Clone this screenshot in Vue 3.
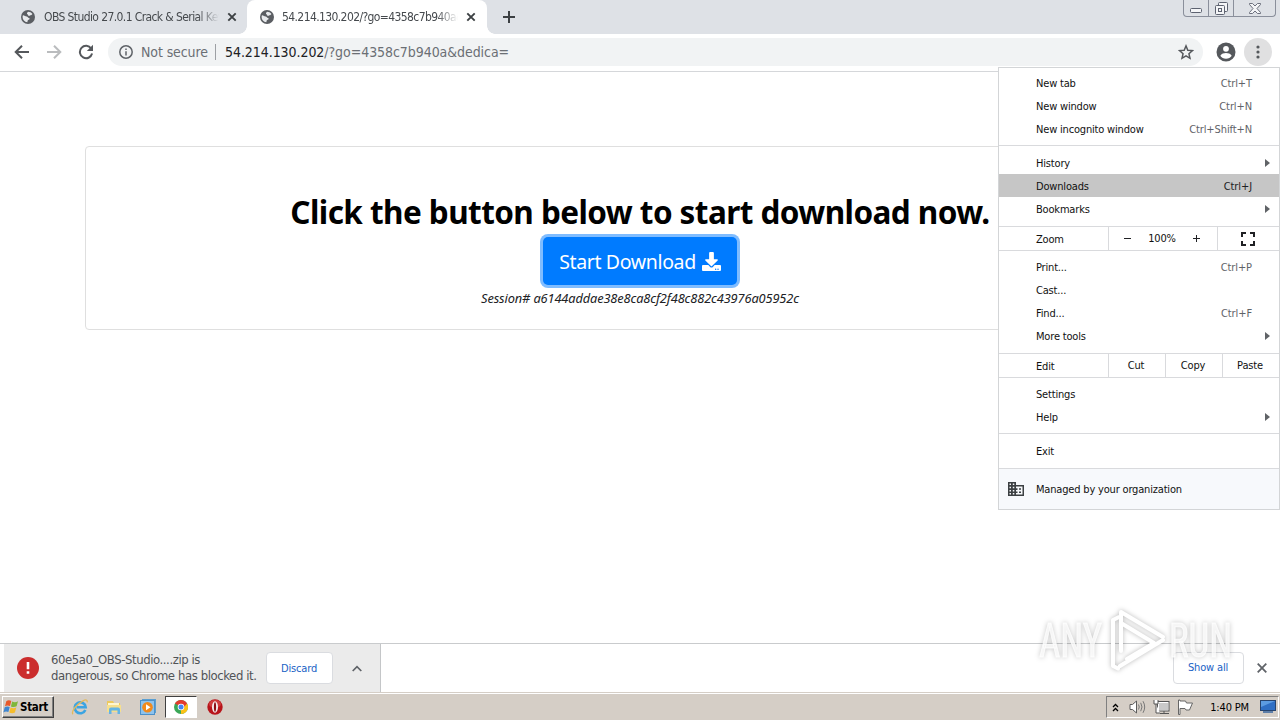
<script setup>
// Browser window with the main menu open, plus the taskbar below it
const tabs = [
  { title: 'OBS Studio 27.0.1 Crack & Serial Key', active: false },
  { title: '54.214.130.202/?go=4358c7b940a&dedica=', active: true }
]

const menuTop = [
  { label: 'New tab', keys: 'Ctrl+T' },
  { label: 'New window', keys: 'Ctrl+N' },
  { label: 'New incognito window', keys: 'Ctrl+Shift+N' }
]
const menuLibrary = [
  { label: 'History', sub: true },
  { label: 'Downloads', keys: 'Ctrl+J', hover: true },
  { label: 'Bookmarks', sub: true }
]
const menuTools = [
  { label: 'Print...', keys: 'Ctrl+P' },
  { label: 'Cast...' },
  { label: 'Find...', keys: 'Ctrl+F' },
  { label: 'More tools', sub: true }
]
const menuHelp = [{ label: 'Settings' }, { label: 'Help', sub: true }]
const menuExit = [{ label: 'Exit' }]

// each group says what row follows it
const groups = [
  { items: menuTop },
  { items: menuLibrary, after: 'zoom' },
  { items: menuTools, after: 'edit' },
  { items: menuHelp },
  { items: menuExit, after: 'managed' }
]
</script>

<template>
  <div class="screen">
    <header class="tabstrip">
      <div v-for="t in tabs" :key="t.title" class="tab" :class="{ active: t.active }">
        <svg class="globe" width="14" height="14" viewBox="0 0 14 14">
          <circle cx="7" cy="7" r="7" fill="#5b5e63" />
          <path d="M2 5.2c1.6.2 2.4 1.2 3.6 1.2 1.300 0 1.200 1.300 2.400 1.500 1 .2.7 1.700-.4 1.900-1.100.2-.9 1.600-1.300 2.500C3.600 12 1.600 9.800 1.600 7c0-.7.1-1.200.4-1.800z" fill="#e8eaed" />
          <path d="M7 1.700c1.800 0 3.400.8 4.400 2.300-.7.500-.6 1.200-1.500 1.200-1 0-1.100.8-2 .7-1-.1-.6-1.300-1.500-1.600C5.600 4 6 2.400 7 1.700z" fill="#e8eaed" />
        </svg>
        <span class="tab-title">{{ t.title }}</span>
        <svg class="tab-close" width="10" height="10" viewBox="0 0 10 10">
          <path d="M1.300 1.300l7.400 7.400M8.700 1.300L1.300 8.700" stroke="#3c4043" stroke-width="1.900" />
        </svg>
      </div>
      <svg class="new-tab" width="12" height="12" viewBox="0 0 12 12">
        <path d="M6 0v12M0 6h12" stroke="#3c4043" stroke-width="2" />
      </svg>
      <div class="win-buttons">
        <span class="wb">
          <svg width="12" height="5" viewBox="0 0 12 5"><rect x=".5" y=".5" width="11" height="4" rx="1" fill="#f4f5f7" stroke="#5d6270" /></svg>
        </span>
        <span class="wb mid">
          <svg width="13" height="13" viewBox="0 0 13 13" fill="#f4f5f7" stroke="#5d6270">
            <rect x="3.500" y=".5" width="9" height="9" rx="1" />
            <rect x=".5" y="3.500" width="9" height="9" rx="1" />
            <rect x="3.500" y="6.500" width="3" height="3" />
          </svg>
        </span>
        <span class="wb wide">
          <svg width="12" height="11" viewBox="0 0 12 11">
            <path d="M.5.5h3L6 3l2.500-2.500h3v1L8 5.500l3.500 4v1h-3L6 8l-2.500 2.500h-3v-1L4 5.500.500 1.500z" fill="#f4f5f7" stroke="#5d6270" stroke-width=".9" />
          </svg>
        </span>
      </div>
    </header>

    <div class="toolbar">
      <svg class="nav" width="16" height="16" viewBox="0 0 16 16"><path d="M15 8H2.200M8 1.700L1.700 8 8 14.300" fill="none" stroke="#55585c" stroke-width="2" /></svg>
      <svg class="nav" width="16" height="16" viewBox="0 0 16 16"><path d="M1 8h12.800M8 1.700L14.300 8 8 14.300" fill="none" stroke="#babcbe" stroke-width="2" /></svg>
      <svg class="nav" width="16" height="16" viewBox="0 0 16 16">
        <path d="M13.200 4.500A6.200 6.200 0 1 0 14.100 9.600" fill="none" stroke="#55585c" stroke-width="2" />
        <path d="M15 .8v6.200H8.800z" fill="#55585c" />
      </svg>
      <div class="omnibox">
        <svg width="14" height="14" viewBox="0 0 14 14">
          <circle cx="7" cy="7" r="6.200" fill="none" stroke="#5f6368" stroke-width="1.500" />
          <path d="M7 6.200v4.300M7 3.400v1.600" stroke="#5f6368" stroke-width="1.500" />
        </svg>
        <span class="insecure">Not secure</span>
        <span class="bar"></span>
        <span class="url"><b>54.214.130.202</b>/?go=4358c7b940a&amp;dedica=</span>
        <svg class="star" width="16" height="16" viewBox="0 0 24 24">
          <path d="M12 2.800l2.700 6.500 7 .6-5.300 4.600 1.600 6.900-6-3.700-6 3.700 1.600-6.900L2.300 9.900l7-.6z" fill="none" stroke="#55585c" stroke-width="2.200" />
        </svg>
      </div>
      <svg class="avatar" width="20" height="20" viewBox="0 0 20 20">
        <circle cx="10" cy="10" r="9.500" fill="#55585c" />
        <circle cx="10" cy="6.800" r="2.900" fill="#fff" />
        <path d="M4.300 13.700c1-1.900 3.700-2.600 5.700-2.600s4.700.7 5.700 2.600c-1.200 1.800-3.300 3-5.700 3s-4.500-1.200-5.700-3z" fill="#fff" />
      </svg>
      <span class="dots">
        <svg width="4" height="14" viewBox="0 0 4 14" fill="#55585c"><circle cx="2" cy="2" r="1.600" /><circle cx="2" cy="7" r="1.600" /><circle cx="2" cy="12" r="1.600" /></svg>
      </span>
    </div>

    <main class="page">
      <section class="card">
        <h1>Click the button below to start download now.</h1>
        <button class="download">
          <span>Start Download</span>
          <svg width="19" height="19" viewBox="0 0 512 512" fill="#fff">
            <path d="M216 0h80c13.300 0 24 10.700 24 24v168h87.700c17.800 0 26.700 21.500 14.100 34.100L269.700 378.300c-7.500 7.500-19.800 7.500-27.300 0L90.100 226.100c-12.600-12.600-3.700-34.100 14.100-34.100H192V24c0-13.300 10.700-24 24-24zm296 376v112c0 13.300-10.700 24-24 24H24c-13.300 0-24-10.700-24-24V376c0-13.300 10.700-24 24-24h146.700l49 49c20.100 20.100 52.500 20.100 72.600 0l49-49H488c13.300 0 24 10.700 24 24zm-124 88c0-11-9-20-20-20s-20 9-20 20 9 20 20 20 20-9 20-20zm64 0c0-11-9-20-20-20s-20 9-20 20 9 20 20 20 20-9 20-20z" />
          </svg>
        </button>
        <p class="session">Session# a6144addae38e8ca8cf2f48c882c43976a05952c</p>
      </section>
    </main>

    <footer class="shelf">
      <div class="dl-item">
        <svg width="22" height="22" viewBox="0 0 22 22">
          <circle cx="11" cy="11" r="11" fill="#cb2d2d" />
          <path d="M11 5v7.200M11 14.200v2.600" stroke="#fff" stroke-width="2.600" />
        </svg>
        <p class="dl-text">60e5a0_OBS-Studio....zip is<br />dangerous, so Chrome has blocked it.</p>
        <button class="flat">Discard</button>
        <svg class="chev" width="10" height="7" viewBox="0 0 10 7"><path d="M.7 6L5 1.700 9.300 6" fill="none" stroke="#5f6368" stroke-width="1.700" /></svg>
      </div>
      <button class="flat all">Show all</button>
      <svg class="shelf-close" width="10" height="10" viewBox="0 0 10 10"><path d="M.7.7l8.600 8.600M9.300.7L.7 9.300" stroke="#5f6368" stroke-width="1.800" /></svg>
    </footer>

    <div class="taskbar">
      <div class="start">
        <svg width="17" height="16" viewBox="0 0 17 16">
          <path d="M3.300 2.200C5 1 6.800 1.200 8.300 2L7 7C5.400 6.200 3.700 6.100 2 7.200z" fill="#e8592a" />
          <path d="M9.200 2.500c1.700.9 3.600 1 5.800-.2l-1.400 5c-2 1.100-4 .9-5.700.1z" fill="#7fb73b" />
          <path d="M1.700 8.300c1.700-1.100 3.400-1 5-.2l-1.300 5c-1.600-.8-3.300-.8-5 .3z" fill="#3f86d0" />
          <path d="M7.600 8.500c1.700.8 3.700 1 5.700-.1l-1.400 5c-2 1.100-3.900.9-5.600 0z" fill="#f6bd2c" />
        </svg>
        <span>Start</span>
      </div>
      <div class="quick">
        <svg width="18" height="18" viewBox="0 0 18 18">
          <path d="M14.300 11.900A5.500 5.500 0 1 1 14.700 9.300H5.500" fill="none" stroke="#3ba4e2" stroke-width="2.600" />
          <path d="M2 16.300C-.5 13.500 6.500 5.500 12 2.800c3-1.500 4.500-1 4.200 1.500" fill="none" stroke="#e3b95a" stroke-width="1.300" />
        </svg>
      </div>
      <div class="quick">
        <svg width="18" height="18" viewBox="0 0 18 18">
          <path d="M2 3h6l1 2h6v9H2z" fill="#edc95d" />
          <path d="M3 5h11v2H3z" fill="#fff6cf" />
          <path d="M2 7h14v7H2z" fill="#f6df8d" />
          <path d="M4 16v-4.500Q4 9.500 6 9.500h7q2 0 2 2V16h-2.500v-3.500h-6V16z" fill="#63b4e4" />
        </svg>
      </div>
      <div class="quick">
        <svg width="16" height="16" viewBox="0 0 16 16">
          <rect x="2.500" y=".5" width="13" height="13" fill="#b9dcf6" stroke="#5a9fd2" />
          <rect x=".5" y="1.500" width="14" height="14" fill="#8dc3ee" stroke="#4d91c9" />
          <circle cx="7.500" cy="8.300" r="5.300" fill="#f28a1c" />
          <path d="M6 5.300v6l4.500-3z" fill="#fff" />
        </svg>
      </div>
      <div class="quick pressed">
        <svg width="14" height="14" viewBox="0 0 14 14">
          <circle cx="7" cy="7" r="7" fill="#3aa757" />
          <path d="M7 7L.94 3.500A7 7 0 0 1 13.060 3.500z" fill="#e33b2e" />
          <path d="M7 7l6.060-3.500A7 7 0 0 1 7 14z" fill="#fbc116" />
          <path d="M7 3.500h6.060L10 7z" fill="#e33b2e" />
          <circle cx="7" cy="7" r="3.300" fill="#fff" />
          <circle cx="7" cy="7" r="2.500" fill="#4285f4" />
        </svg>
      </div>
      <div class="quick">
        <svg width="16" height="16" viewBox="0 0 16 16">
          <circle cx="8" cy="8" r="7.700" fill="#b8141a" />
          <ellipse cx="8" cy="5" rx="6" ry="4" fill="#d03c3c" />
          <ellipse cx="8" cy="8" rx="3" ry="5.800" fill="#f5eeee" />
          <ellipse cx="8" cy="8" rx="1.100" ry="4.800" fill="#8c0d12" />
        </svg>
      </div>
      <div class="tray">
        <svg width="7" height="9" viewBox="0 0 7 9"><path d="M1 4l2.500-2.500L6 4M1 8l2.500-2.500L6 8" fill="none" stroke="#000" stroke-width="1.300" /></svg>
        <svg class="vol" width="17" height="14" viewBox="0 0 17 14">
          <path d="M1 4.500h2.500L7.500 1v12l-4-3.500H1z" fill="#fff" stroke="#5c5c5c" />
          <path d="M9.500 4.500q1.500 2.500 0 5M11.700 2.800q2.600 4.200 0 8.400M14 1.200q3.400 5.800 0 11.600" fill="none" stroke="#777" />
        </svg>
        <svg class="net" width="17" height="16" viewBox="0 0 17 16">
          <rect x="5.500" y="3.500" width="10" height="8" fill="#c9c9c9" stroke="#fff" />
          <rect x="4.500" y="2.500" width="11.500" height="9.500" fill="none" stroke="#555" />
          <path d="M7 14.500h9M11 12v2" stroke="#555" />
          <path d="M1 1v4h4V1M3 5v9h4" fill="#fff" stroke="#555" />
        </svg>
        <svg class="flag" width="17" height="16" viewBox="0 0 17 16">
          <path d="M1.500 1v14.500H3V9.500h5l1 1.500h3.500L15.500 4H9.500L8.500 2H3V1z" fill="#fff" stroke="#666" />
        </svg>
        <span class="clock">1:40 PM</span>
        <svg class="desk" width="16" height="14" viewBox="0 0 16 14">
          <rect x=".5" y=".5" width="15" height="10" fill="#2f6fc4" stroke="#27446e" />
          <path d="M1 1h14L1 7z" fill="#5c9ce2" />
          <rect x="3" y="11" width="10" height="2" fill="#5d7ea8" />
        </svg>
      </div>
    </div>

    <nav class="menu">
      <template v-for="(g, i) in groups" :key="i">
        <div class="group" :class="g.after">
          <div v-for="m in g.items" :key="m.label" class="item" :class="{ hover: m.hover }">
            <span>{{ m.label }}</span>
            <span v-if="m.keys" class="keys">{{ m.keys }}</span>
            <svg v-if="m.sub" class="arrow" width="5" height="8" viewBox="0 0 5 8"><path d="M0 0l5 4-5 4z" fill="#606367" /></svg>
          </div>
        </div>
        <div v-if="g.after === 'zoom'" class="row">
          <span class="row-label">Zoom</span>
          <div class="cell zoom-cell">
            <svg width="7" height="7" viewBox="0 0 7 7"><path d="M0 3.500h7" stroke="#202124" /></svg>
            <span class="pct">100%</span>
            <svg width="7" height="7" viewBox="0 0 7 7"><path d="M0 3.500h7M3.500 0v7" stroke="#202124" /></svg>
          </div>
          <div class="cell full">
            <svg width="14" height="14" viewBox="0 0 14 14"><path d="M1 5V1h4M9 1h4v4M13 9v4H9M5 13H1V9" fill="none" stroke="#202124" stroke-width="2" /></svg>
          </div>
        </div>
        <div v-if="g.after === 'edit'" class="row">
          <span class="row-label">Edit</span>
          <div class="cell edit-cell">Cut</div>
          <div class="cell edit-cell">Copy</div>
          <div class="cell edit-cell">Paste</div>
        </div>
      </template>
      <div class="footer">
        <svg width="16" height="14" viewBox="0 0 16 14">
          <path d="M0 0h8v3h8v11H0z" fill="#3c4043" />
          <path d="M1.500 1.500H3V3H1.500zM4.800 1.500h1.500V3H4.800zM1.500 4.700H3v1.500H1.500zM4.800 4.700h1.500v1.500H4.800zM1.500 7.900H3v1.500H1.500zM4.800 7.900h1.500v1.500H4.800zM1.500 11H3v1.500H1.500zM4.800 11h1.500v1.500H4.800zM8 4.500h6.500v8H8V11h1.500V9.500H8V8h1.500V6.300H8z" fill="#f7f9fc" />
          <path d="M11 6.300h2v1.500h-2zM11 9.500h2V11h-2z" fill="#3c4043" />
        </svg>
        <span>Managed by your organization</span>
      </div>
    </nav>

    <svg class="watermark" width="204" height="74" viewBox="0 0 204 74">
      <g class="wm-shade">
        <text x="5" y="54" textLength="63" lengthAdjust="spacingAndGlyphs">ANY</text>
        <text x="135" y="54" textLength="63" lengthAdjust="spacingAndGlyphs">RUN</text>
        <path d="M85 14l-6 3v46l5 2.500M87 48V9l42 25M87 20l33 20-27 16M129 37L86 63" />
      </g>
    </svg>
  </div>
</template>

<style>
body {
  margin: 0;
  overflow: hidden;
}
</style>

<style scoped>
.screen {
  position: relative;
  display: flex;
  flex-direction: column;
  width: 1280px;
  height: 720px;
  overflow: hidden;
  background: #fff;
  color: #202124;
  font-family: "DejaVu Sans Condensed", "DejaVu Sans", sans-serif;
  font-size: 11px;
  font-stretch: condensed;
  white-space: nowrap;
}

.screen svg {
  flex: none;
  display: block;
}

/* tabs */
.tabstrip {
  display: flex;
  height: 34px;
  padding-left: 7px;
  background: #dee1e6;
}

.tab {
  position: relative;
  display: flex;
  align-items: center;
  box-sizing: border-box;
  width: 240px;
  height: 34px;
  padding: 0 10px 0 14px;
  color: #45494d;
}

.tab.active {
  padding-left: 13px;
  padding-right: 11px;
  background: #fff;
  border-radius: 8px 8px 0 0;
}

.tab.active::before,
.tab.active::after {
  content: '';
  position: absolute;
  bottom: 0;
  width: 8px;
  height: 8px;
}

.tab.active::before {
  left: -8px;
  background: radial-gradient(circle at 0 0, transparent 7.5px, #fff 8px);
}

.tab.active::after {
  right: -8px;
  background: radial-gradient(circle at 100% 0, transparent 7.5px, #fff 8px);
}

.tab-title {
  flex: 1;
  margin: 0 8px 0 9px;
  overflow: hidden;
  font-size: 12px;
  letter-spacing: -0.6px;
  mask-image: linear-gradient(to right, #000 88%, transparent);
}

.tab.active .tab-title {
  margin-left: 8px;
}

.new-tab {
  margin: 11px 0 0 16px;
}

.win-buttons {
  display: flex;
  box-sizing: border-box;
  width: 93px;
  height: 17px;
  margin-left: auto;
  margin-right: 4px;
  border: 1px solid #8a8f9b;
  border-top: 0;
  border-radius: 0 0 4px 4px;
}

.wb {
  display: flex;
  align-items: center;
  justify-content: center;
  width: 24px;
}

.wb:first-child {
  padding-top: 4px;
  height: 13px;
}

.wb.mid {
  border: solid #8a8f9b;
  border-width: 0 1px;
}

.wb.wide {
  flex: 1;
}

/* toolbar */
.toolbar {
  display: flex;
  align-items: center;
  box-sizing: border-box;
  height: 38px;
  padding: 0 8px 1px 14px;
  border-bottom: 1px solid #d5d7da;
}

.nav {
  margin-right: 16px;
}

.omnibox {
  display: flex;
  align-items: center;
  flex: 1;
  box-sizing: border-box;
  height: 28px;
  margin-left: -2px;
  padding: 0 9px 0 11px;
  border-radius: 14px;
  background: #f1f3f4;
  color: #6b6f74;
  font-size: 14px;
}

.insecure {
  width: 68px;
  margin-left: 8px;
  letter-spacing: -0.1px;
}

.bar {
  width: 1px;
  height: 16px;
  margin: 0 9px 0 6px;
  background: #9da0a4;
}

.url {
  letter-spacing: -0.06px;
}

.url b {
  color: #202124;
  font-weight: 400;
}

.star {
  margin-left: auto;
}

.avatar {
  margin-left: 13px;
}

.dots {
  display: flex;
  align-items: center;
  justify-content: center;
  width: 28px;
  height: 28px;
  margin-left: 8px;
  border-radius: 50%;
  background: #e0e0e1;
}

/* page */
.page {
  flex: 1;
  padding-top: 74px;
}

.card {
  display: flex;
  flex-direction: column;
  align-items: center;
  box-sizing: border-box;
  width: 1110px;
  height: 184px;
  margin: 0 auto;
  padding-top: 46px;
  border: 1px solid #dfdfdf;
  border-radius: 4px;
  font-family: "Noto Sans", "Open Sans", sans-serif;
}

h1 {
  margin: 0;
  color: #000;
  font-size: 31.5px;
  font-weight: 700;
  letter-spacing: -0.57px;
  line-height: 38px;
}

.download {
  display: flex;
  align-items: center;
  justify-content: center;
  gap: 6px;
  box-sizing: border-box;
  width: 194px;
  height: 48px;
  margin-top: 6px;
  padding: 1px 0 0;
  border: 0;
  border-radius: 5px;
  background: #007bff;
  box-shadow: 0 0 0 3px #7fbcff;
  color: #fff;
  font: 19.5px "Noto Sans", "Open Sans", sans-serif;
  letter-spacing: -0.35px;
}

.session {
  margin: 4px 0 0;
  font-size: 12.8px;
  font-style: italic;
  letter-spacing: -0.12px;
  line-height: 19px;
}

/* download shelf */
.shelf {
  display: flex;
  align-items: center;
  box-sizing: border-box;
  height: 49px;
  padding: 0 13px 0 4px;
  border-top: 1px solid #c9cbcd;
}

.dl-item {
  display: flex;
  align-items: center;
  box-sizing: border-box;
  width: 377px;
  height: 48px;
  padding-left: 13px;
  border-right: 1px solid #c4c6c8;
  background: #ebebeb;
}

.dl-text {
  width: 206px;
  margin: 0 9px 0 12px;
  color: #505357;
  font-size: 13px;
  letter-spacing: -0.42px;
  line-height: 16px;
}

.flat {
  box-sizing: border-box;
  width: 67px;
  height: 32px;
  padding: 0 1px 0 0;
  border: 1px solid #dadce0;
  border-radius: 4px;
  background: #fff;
  color: #1a62c5;
  font: inherit;
  letter-spacing: -0.15px;
}

.flat.all {
  width: 71px;
  margin-left: auto;
  padding-bottom: 2px;
}

.chev {
  margin-left: 19px;
}

.shelf-close {
  margin-left: 13px;
}

/* taskbar */
.taskbar {
  display: flex;
  align-items: center;
  box-sizing: border-box;
  height: 28px;
  padding: 1px 1px 0 2px;
  border-top: 1px solid #d5cec6;
  background: #d5cec6;
  box-shadow: inset 0 1px #fff;
}

.start {
  display: flex;
  align-items: center;
  box-sizing: border-box;
  width: 52px;
  height: 22px;
  margin-right: 10px;
  border: 1px solid;
  border-color: #fff #404040 #404040 #fff;
  box-shadow: inset -1px -1px #808080;
  color: #000;
  font-size: 11.5px;
  font-weight: 700;
  letter-spacing: -0.3px;
}

.quick {
  display: flex;
  align-items: center;
  justify-content: center;
  box-sizing: border-box;
  width: 32px;
  height: 22px;
  margin-right: 1.8px;
}

.quick.pressed {
  border: 1px solid;
  border-color: #404040 #fff #fff #404040;
  background: #fff;
}

.tray {
  display: flex;
  align-items: center;
  box-sizing: border-box;
  width: 173px;
  height: 22px;
  margin-left: auto;
  padding: 0 2px 0 5px;
  border: 1px solid;
  border-color: #808080 #fff #fff #808080;
}

.vol {
  margin-left: 10px;
}

.net {
  margin-left: 7px;
}

.flag {
  margin-left: 7px;
}

.clock {
  margin-left: auto;
  color: #000;
  letter-spacing: -0.15px;
}

.desk {
  margin-left: 11px;
}

/* main menu */
.menu {
  position: absolute;
  top: 67px;
  left: 998px;
  box-sizing: border-box;
  width: 282px;
  height: 443px;
  border: 1px solid #d3d5d7;
  background: #fff;
  color: #111;
  letter-spacing: -0.18px;
}

.group {
  padding: 5px 0;
  border-bottom: 1px solid #d9dadd;
}

.group:first-child {
  padding-top: 3px;
}

.group.zoom,
.group.edit,
.group.managed {
  padding-bottom: 6px;
}

.item {
  display: flex;
  align-items: center;
  box-sizing: border-box;
  height: 23px;
  padding: 2px 9px 0 37px;
}

.item.hover {
  background: #c6c6c6;
}

.keys {
  margin-left: auto;
  margin-right: 18px;
  color: #5f6368;
  letter-spacing: -0.1px;
}

.hover .keys {
  color: #202124;
}

.arrow {
  margin: -1px 0 0 auto;
}

.row {
  display: flex;
  height: 23px;
  border-bottom: 1px solid #d9dadd;
}

.row + .group {
  padding-top: 4px;
}

.row-label {
  box-sizing: border-box;
  width: 109px;
  padding-left: 37px;
  line-height: 25px;
}

.cell {
  display: flex;
  align-items: center;
  justify-content: center;
  box-sizing: border-box;
  padding-right: 2px;
  border-left: 1px solid #d9dadd;
}

.zoom-cell {
  width: 109px;
  gap: 17px;
}

.full {
  flex: 1;
}

.edit-cell {
  width: 57px;
}

.footer {
  display: flex;
  align-items: center;
  gap: 12px;
  height: 40px;
  padding-left: 9px;
  background: #f7f9fc;
}

.watermark {
  position: absolute;
  top: 603px;
  left: 1034px;
  pointer-events: none;
}

.wm-shade {
  fill: rgba(255, 255, 255, 0.75);
  stroke: rgba(255, 255, 255, 0.75);
  stroke-width: 1;
  filter: drop-shadow(0 0 2.5px rgba(0, 0, 0, 0.28));
  font-family: Roboto, sans-serif;
  font-size: 49px;
  font-weight: 400;
}

.wm-shade path {
  fill: none;
  stroke: #fff;
  stroke-width: 4;
  stroke-linecap: round;
  stroke-linejoin: round;
}
</style>
